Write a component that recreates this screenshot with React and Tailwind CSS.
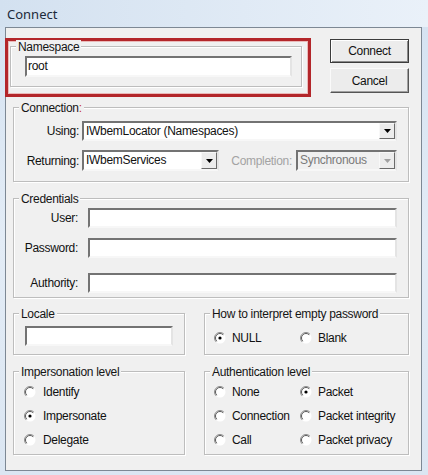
import React from 'react';

const font = { fontFamily: '"Liberation Sans", Arial, sans-serif' };

function GroupBox({ title, className, children, dot }) {
  return (
    <div className={`relative border border-[#bdbdbd] shadow-[inset_1px_1px_0_#fff,1px_1px_0_#fff] ${className}`}>
      <span className="absolute -top-[7px] left-[5px] bg-[#f0f0f0] px-[2px] leading-[14px] text-[#151515]">
        {title}
        {dot && <span className="text-[#c8383b]">:</span>}
      </span>
      {children}
    </div>
  );
}

function TextBox({ className, value, disabled }) {
  return (
    <div
      className={`border-2 border-t-[#737373] border-l-[#737373] border-b-[#f7f7f7] border-r-[#e4e4e4] ${
        disabled ? 'bg-[#f0f0f0]' : 'bg-white'
      } ${className}`}
    >
      {value && <span className="block pl-[1px] leading-[17px]">{value}</span>}
    </div>
  );
}

function Combo({ className, value, disabled }) {
  return (
    <div
      className={`flex border-2 border-t-[#737373] border-l-[#737373] border-b-[#f7f7f7] border-r-[#e4e4e4] ${
        disabled ? 'bg-[#f0f0f0] text-[#7a7a7a]' : 'bg-white text-[#111]'
      } ${className}`}
    >
      <span className="flex-1 pl-[2px] leading-[16px] whitespace-nowrap overflow-hidden">{value}</span>
      <div className="w-[16px] flex items-center justify-center border border-t-[#f8f8f8] border-l-[#f8f8f8] border-b-[#6a6a6a] border-r-[#6a6a6a] bg-[#ececec]">
        <svg width="7" height="4" viewBox="0 0 7 4">
          <path d="M0 0h7L3.5 4z" fill={disabled ? '#a0a0a0' : '#000'} />
        </svg>
      </div>
    </div>
  );
}

function Radio({ label, checked, gap = 'gap-[6px]' }) {
  return (
    <div className={`flex items-center h-[16px] ${gap}`}>
      <svg width="12" height="12" viewBox="0 0 12 12" className="shrink-0">
        <circle cx="6" cy="6" r="5.5" fill="#fff" />
        <path d="M9.9 2.1A5.5 5.5 0 0 0 2.1 9.9" fill="none" stroke="#8d8d8d" strokeWidth="1" />
        <path d="M9.2 2.8A4.5 4.5 0 0 0 2.8 9.2" fill="none" stroke="#5a5a5a" strokeWidth="1" />
        {checked && <circle cx="6" cy="6" r="1.6" fill="#000" />}
      </svg>
      <span className="leading-[16px] whitespace-nowrap">{label}</span>
    </div>
  );
}

export default function App() {
  return (
    <div
      className="w-[428px] h-[475px] overflow-hidden bg-gradient-to-b from-[#d4e2f1] via-[#e3ecf6] to-[#dbe6f2]"
      style={font}
    >
      {/* Title bar */}
      <div className="h-[27px] pt-[2px] pl-[7px] bg-gradient-to-r from-[#d3e1f0] to-[#eaf1f9]">
        <span
          className="text-[13px] leading-[20px] text-[#1c2a3b]"
          style={{ fontFamily: '"Noto Sans", "Open Sans", sans-serif' }}
        >
          Connect
        </span>
      </div>

      {/* Client area */}
      <div className="ml-[5px] w-[417px] h-[444px] border border-[#7d8894] bg-[#f0f0f0] text-[12px] tracking-[-0.3px] text-[#111]">
        {/* Namespace + buttons */}
        <div className="flex items-start mt-[10px]">
          <div className="-ml-[1px] w-[306px] h-[59px] border-[3px] border-[#b3262a] shadow-[inset_0_0_0_1px_#eab9b9] pl-[2px] pt-[5px]">
            <GroupBox title="Namespace" className="w-[292px] h-[41px]">
              <TextBox className="ml-[14px] mt-[9px] w-[267px] h-[21px]" value="root" />
            </GroupBox>
          </div>
          <div className="ml-[19px] mt-[1px] flex flex-col gap-[5px]">
            <button className="w-[79px] h-[24px] border border-[#3c3c3c] bg-[#ececec] shadow-[inset_1px_1px_0_#fff,inset_-1px_-1px_0_#8a8a8a] text-[12px] tracking-[-0.3px]">
              Connect
            </button>
            <button className="w-[79px] h-[25px] border border-t-[#fafafa] border-l-[#fafafa] border-b-[#555] border-r-[#555] bg-[#ececec] shadow-[inset_-1px_-1px_0_#a0a0a0] text-[12px] tracking-[-0.3px]">
              Cancel
            </button>
          </div>
        </div>

        {/* Connection */}
        <GroupBox title="Connection" dot className="ml-[7px] mt-[10px] w-[396px] h-[75px]">
          <div className="flex items-center mt-[13px]">
            <span className="w-[65px] text-right">Using:</span>
            <Combo className="ml-[3px] w-[315px] h-[20px]" value="IWbemLocator (Namespaces)" />
          </div>
          <div className="flex items-center mt-[9px] w-[383px]">
            <span className="w-[65px] text-right">Returning:</span>
            <Combo className="ml-[3px] w-[137px] h-[21px]" value="IWbemServices" />
            <span className="ml-auto mr-[4px] text-[#a3a3a3]">Completion:</span>
            <Combo className="w-[101px] h-[21px]" value="Synchronous" disabled />
          </div>
        </GroupBox>

        {/* Credentials */}
        <GroupBox title="Credentials" className="ml-[7px] mt-[16px] w-[396px] h-[100px]">
          <div className="flex items-center mt-[9px]">
            <span className="w-[64px] text-right">User:</span>
            <TextBox className="ml-[10px] w-[309px] h-[20px]" />
          </div>
          <div className="flex items-center mt-[10px]">
            <span className="w-[64px] text-right">Password:</span>
            <TextBox className="ml-[10px] w-[309px] h-[20px]" />
          </div>
          <div className="flex items-center mt-[15px]">
            <span className="w-[64px] text-right">Authority:</span>
            <TextBox className="ml-[10px] w-[309px] h-[20px]" />
          </div>
        </GroupBox>

        {/* Locale / empty password */}
        <div className="flex mt-[15px]">
          <GroupBox title="Locale" className="ml-[7px] w-[172px] h-[42px]">
            <TextBox className="ml-[11px] mt-[12px] w-[148px] h-[20px]" />
          </GroupBox>
          <GroupBox title="How to interpret empty password" className="ml-[19px] w-[205px] h-[42px]">
            <div className="grid grid-cols-[86px_auto] ml-[9px] mt-[16px]">
              <Radio label="NULL" checked />
              <Radio label="Blank" />
            </div>
          </GroupBox>
        </div>

        {/* Impersonation / Authentication */}
        <div className="flex mt-[16px]">
          <GroupBox title="Impersonation level" className="ml-[7px] w-[172px] h-[84px]">
            <div className="flex flex-col gap-[8px] ml-[10px] mt-[12px]">
              <Radio label="Identify" gap="gap-[7px]" />
              <Radio label="Impersonate" checked gap="gap-[7px]" />
              <Radio label="Delegate" gap="gap-[7px]" />
            </div>
          </GroupBox>
          <GroupBox title="Authentication level" className="ml-[19px] w-[205px] h-[84px]">
            <div className="grid grid-cols-[86px_auto] gap-y-[8px] ml-[9px] mt-[12px]">
              <Radio label="None" />
              <Radio label="Packet" checked />
              <Radio label="Connection" />
              <Radio label="Packet integrity" />
              <Radio label="Call" />
              <Radio label="Packet privacy" />
            </div>
          </GroupBox>
        </div>
      </div>
    </div>
  );
}
